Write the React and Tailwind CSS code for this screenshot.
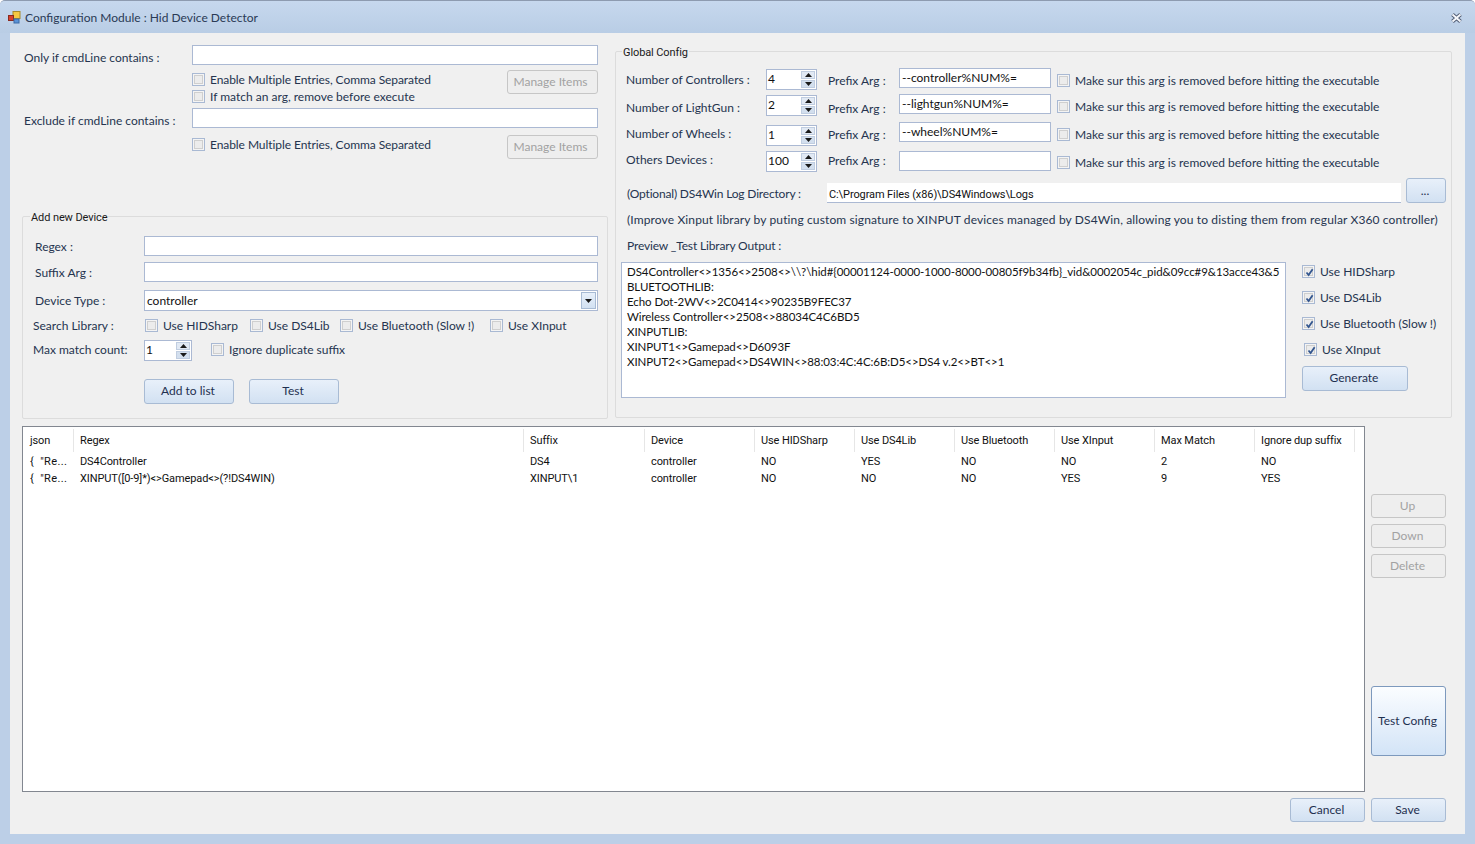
import React from "react";

const inputCls = "h-5 bg-white border border-[#abb9d3] px-[2px] text-[12px] leading-[17px] text-[#111]";
const narrowFont = "[font-family:Roboto,sans-serif] text-[11px] tracking-[-0.1px]";

const Check = ({ label, checked, className = "" }) => (
  <div className={`flex items-center h-[17px] ${className}`}>
    <div className="w-[13px] h-[13px] shrink-0 border border-[#a9b9d3] bg-[#f4f4f4] p-px">
      <div className="w-full h-full border border-[#cfcfcf] bg-[#ececec] relative">
        {checked && (
          <svg viewBox="0 0 9 9" className="absolute inset-0 w-[9px] h-[9px]">
            <path d="M1.5 4.5 L3.6 7 L7.6 1.2" fill="none" stroke="#33568f" strokeWidth="1.8" />
          </svg>
        )}
      </div>
    </div>
    {label && <span className="ml-[5px] whitespace-nowrap">{label}</span>}
  </div>
);

const Spin = ({ value, className = "" }) => (
  <div className={`flex h-[21px] bg-white border border-[#abb9d3] ${className}`}>
    <div className="flex-1 pl-px leading-[18px] text-[#111]">{value}</div>
    <div className="w-[16px] flex flex-col gap-px p-px">
      <div className="flex-1 flex items-center justify-center bg-[#e1e9f4] border border-[#c0cde0]">
        <svg viewBox="0 0 7 4" className="w-[7px] h-[4px]"><path d="M3.5 0 L7 4 H0 Z" fill="#1a1a1a" /></svg>
      </div>
      <div className="flex-1 flex items-center justify-center bg-[#d3dfee] border border-[#c0cde0]">
        <svg viewBox="0 0 7 4" className="w-[7px] h-[4px]"><path d="M0 0 H7 L3.5 4 Z" fill="#1a1a1a" /></svg>
      </div>
    </div>
  </div>
);

const Btn = ({ children, className = "" }) => (
  <button className={`shrink-0 flex items-center justify-center pr-[2px] rounded-[3px] border border-[#a8bbd4] bg-gradient-to-b from-[#e8f0fa] to-[#d2e1f2] text-[#1f3050] ${className}`}>
    {children}
  </button>
);

const DisabledBtn = ({ children, className = "" }) => (
  <button className={`shrink-0 flex items-center justify-center pr-[2px] rounded-[3px] border border-[#c6c6c6] bg-[#eeeeee] text-[#a2a2a2] ${className}`}>
    {children}
  </button>
);

const globalRows = [
  { label: "Number of Controllers :", value: "4", prefix: "--controller%NUM%=", h: "h-[26px]", lab: "mt-[2px]", spin: "mt-[1px]", inp: "", pre: "mt-[3px]" },
  { label: "Number of LightGun :", value: "2", prefix: "--lightgun%NUM%=", h: "h-[28px]", lab: "mt-[4px]", spin: "mt-[1px]", inp: "", pre: "mt-[5px]" },
  { label: "Number of Wheels :", value: "1", prefix: "--wheel%NUM%=", h: "h-[28px]", lab: "mt-[2px]", spin: "mt-[3px]", inp: "", pre: "mt-[3px]" },
  { label: "Others Devices :", value: "100", prefix: "", h: "h-[28px]", lab: "mt-0", spin: "mt-[1px]", inp: "mt-[1px]", pre: "mt-[1px]" },
];

const columns = ["json", "Regex", "Suffix", "Device", "Use HIDSharp", "Use DS4Lib", "Use Bluetooth", "Use XInput", "Max Match", "Ignore dup suffix"];
const tableRows = [
  ['{  "Re...', "DS4Controller", "DS4", "controller", "NO", "YES", "NO", "NO", "2", "NO"],
  ['{  "Re...', 'XINPUT([0-9]*)<>Gamepad<>(?!DS4WIN)', "XINPUT\\1", "controller", "NO", "NO", "NO", "YES", "9", "YES"],
];
const gridCols = "grid grid-cols-[50px_450px_121px_110px_100px_100px_100px_100px_100px_100px] ml-px";

const previewLines = [
  "DS4Controller<>1356<>2508<>\\\\?\\hid#{00001124-0000-1000-8000-00805f9b34fb}_vid&0002054c_pid&09cc#9&13acce43&5",
  "BLUETOOTHLIB:",
  "Echo Dot-2WV<>2C0414<>90235B9FEC37",
  "Wireless Controller<>2508<>88034C4C6BD5",
  "XINPUTLIB:",
  "XINPUT1<>Gamepad<>D6093F",
  "XINPUT2<>Gamepad<>DS4WIN<>88:03:4C:4C:6B:D5<>DS4 v.2<>BT<>1",
];

export default function App() {
  return (
    <div className="w-[1475px] h-[844px] overflow-hidden flex flex-col bg-[#bccfe7] border-t border-[#8d9bb0] rounded-t-[5px] [font-family:Lato,'Noto_Sans',sans-serif] text-[12px] text-[#25344f]">
      {/* title bar */}
      <div className="h-[32px] shrink-0 flex items-center pl-[8px] pr-[13px] pt-px bg-gradient-to-b from-[#c6d8ee] to-[#b9cde5]">
        <svg viewBox="0 0 13 13" className="w-[13px] h-[13px]">
          <rect x="5" y="0.5" width="7" height="7" fill="#f5c842" stroke="#a88a2a" />
          <rect x="0.5" y="4.5" width="5" height="5" fill="#d8402c" stroke="#8a2a20" />
          <rect x="6" y="8" width="5" height="4" fill="#5b93d8" stroke="#3c6aa5" />
        </svg>
        <span className="ml-[4px] text-[#2a3a55] text-[12px]">Configuration Module : Hid Device Detector</span>
        <svg viewBox="0 0 11 10" className="ml-auto w-[11px] h-[10px]">
          <path d="M1.5 1.5 L9.5 8.5 M9.5 1.5 L1.5 8.5" stroke="#4e5a72" strokeWidth="3.8" />
          <path d="M1.5 1.5 L9.5 8.5 M9.5 1.5 L1.5 8.5" stroke="#f4f6fa" strokeWidth="2" />
        </svg>
      </div>

      {/* client area */}
      <div className="w-[1455px] h-[801px] ml-[10px] bg-[#f0f0f0] flex flex-col">
        <div className="flex h-[385px] shrink-0">
          {/* left column */}
          <div className="w-[605px] shrink-0 pl-[12px] pt-[12px]">
            <div className="pl-[2px]">
              <div className="flex items-start h-5">
                <span className="w-[168px] mt-[4px]">Only if cmdLine contains :</span>
                <div className={`w-[406px] ${inputCls}`} />
              </div>
              <div className="flex mt-[5px] ml-[168px] h-[38px]">
                <div className="w-[315px] pt-px">
                  <Check label="Enable Multiple Entries, Comma Separated" className="tracking-[-0.07px]" />
                  <Check label="If match an arg, remove before execute" />
                </div>
                <DisabledBtn className="w-[91px] h-[24px] pr-[4px]">Manage Items</DisabledBtn>
              </div>
              <div className="flex items-start h-5">
                <span className="w-[168px] mt-[4px]">Exclude if cmdLine contains :</span>
                <div className={`w-[406px] ${inputCls}`} />
              </div>
              <div className="flex mt-[7px] ml-[168px]">
                <div className="w-[315px] pt-px">
                  <Check label="Enable Multiple Entries, Comma Separated" className="tracking-[-0.07px]" />
                </div>
                <DisabledBtn className="w-[91px] h-[24px] pr-[4px]">Manage Items</DisabledBtn>
              </div>
            </div>

            {/* add new device */}
            <div className="mt-[57px] w-[586px] h-[203px] border border-[#dcdcdc] rounded-[2px]">
              <div className={`-mt-[7px] ml-[7px] w-fit px-px bg-[#f0f0f0] text-[#1a1a1a] leading-[16px] ${narrowFont}`}>Add new Device</div>
              <div className="pl-[10px] mt-[10px]">
                <div className="flex items-start h-5">
                  <span className="w-[111px] pl-[2px] mt-[2px]">Regex :</span>
                  <div className={`w-[454px] ${inputCls}`} />
                </div>
                <div className="flex items-start h-5 mt-[6px]">
                  <span className="w-[111px] pl-[2px] mt-[2px]">Suffix Arg :</span>
                  <div className={`w-[454px] ${inputCls}`} />
                </div>
                <div className="flex items-center mt-[8px]">
                  <span className="w-[111px] pl-[2px]">Device Type :</span>
                  <div className="w-[454px] h-[21px] flex bg-white border border-[#abb9d3] text-[#111]">
                    <span className="flex-1 pl-[2px] leading-[19px]">controller</span>
                    <div className="w-[15px] m-px flex items-center justify-center bg-gradient-to-b from-[#e8f0fa] to-[#d2e1f2] border border-[#a8bbd4]">
                      <svg viewBox="0 0 7 4" className="w-[7px] h-[4px]"><path d="M0 0 H7 L3.5 4 Z" fill="#1a1a1a" /></svg>
                    </div>
                  </div>
                </div>
                <div className="flex items-center mt-[6px] h-[17px]">
                  <span className="w-[112px]">Search Library :</span>
                  <Check label="Use HIDSharp" className="w-[105px]" />
                  <Check label="Use DS4Lib" className="w-[90px]" />
                  <Check label="Use Bluetooth (Slow !)" className="w-[150px]" />
                  <Check label="Use XInput" />
                </div>
                <div className="flex items-center mt-[6px]">
                  <span className="w-[111px] pb-[2px]">Max match count:</span>
                  <Spin value="1" className="w-[48px]" />
                  <Check label="Ignore duplicate suffix" className="ml-[19px] mb-[2px]" />
                </div>
                <div className="flex mt-[18px] ml-[111px] gap-[15px]">
                  <Btn className="w-[90px] h-[25px] pb-[2px]">Add to list</Btn>
                  <Btn className="w-[90px] h-[25px] pb-[2px]">Test</Btn>
                </div>
              </div>
            </div>
          </div>

          {/* global config */}
          <div className="w-[837px] h-[367px] mt-[18px] border border-[#dcdcdc] rounded-[2px]">
            <div className={`-mt-[7px] ml-[6px] w-fit px-px bg-[#f0f0f0] text-[#1a1a1a] leading-[16px] ${narrowFont}`}>Global Config</div>
            <div className="pl-[10px] mt-[7px]">
              {globalRows.map((r) => (
                <div key={r.label} className={`flex items-start ${r.h}`}>
                  <span className={`w-[140px] h-5 leading-5 ${r.lab}`}>{r.label}</span>
                  <Spin value={r.value} className={`w-[51px] ${r.spin}`} />
                  <span className={`ml-[11px] w-[71px] h-5 leading-5 ${r.pre}`}>Prefix Arg :</span>
                  <div className={`w-[152px] text-[#111] ${inputCls} ${r.inp}`}>{r.prefix}</div>
                  <Check label="Make sur this arg is removed before hitting the executable" className="ml-[6px] mt-[4px]" />
                </div>
              ))}
              <div className="flex items-end h-[25px]">
                <span className="w-[201px] pl-px h-5 leading-5 -mb-px tracking-[-0.18px]">(Optional) DS4Win Log Directory :</span>
                <div className={`w-[574px] h-5 bg-white border-b border-[#abb9d3] pl-[2px] leading-[23px] text-[#111] ${narrowFont}`}>C:\Program Files (x86)\DS4Windows\Logs</div>
                <Btn className="ml-[5px] w-[40px] h-[25px]">...</Btn>
              </div>
              <div className="mt-[7px] pl-px h-5 leading-5 whitespace-nowrap tracking-[0.13px]">(Improve Xinput library by puting custom signature to XINPUT devices managed by DS4Win, allowing you to disting them from regular X360 controller)</div>
              <div className="mt-[6px] pl-px h-5 leading-5 tracking-[-0.15px]">Preview _Test Library Output :</div>
            </div>
            <div className="flex mt-[6px] ml-[5px]">
              <div className="w-[665px] h-[136px] bg-white border border-[#abb9d3] pt-px pl-[5px] leading-[15px] text-[#111] text-[11.5px] tracking-[-0.07px] whitespace-nowrap overflow-hidden">
                {previewLines.map((l) => (
                  <div key={l}>{l}</div>
                ))}
              </div>
              <div className="ml-[16px] flex flex-col pt-px">
                <Check checked label="Use HIDSharp" />
                <Check checked label="Use DS4Lib" className="mt-[9px]" />
                <Check checked label="Use Bluetooth (Slow !)" className="mt-[9px]" />
                <Check checked label="Use XInput" className="mt-[9px] ml-[2px]" />
                <Btn className="w-[106px] h-[25px] mt-[8px] pb-[2px]">Generate</Btn>
              </div>
            </div>
          </div>
        </div>

        {/* table + side buttons */}
        <div className="flex mt-[8px] ml-[12px]">
          <div className={`w-[1343px] h-[366px] bg-white border border-[#828790] text-[#111] ${narrowFont}`}>
            <div className={`${gridCols} h-[23px] mt-[2px]`}>
              {columns.map((c) => (
                <div key={c} className="pl-[6px] leading-[23px] border-r border-[#e6e6e6] whitespace-nowrap overflow-hidden">{c}</div>
              ))}
            </div>
            <div className="pt-px">
              {tableRows.map((row) => (
                <div key={row[1]} className={`${gridCols} h-[17px] leading-[17px]`}>
                  {row.map((cell, i) => (
                    <div key={i} className={i === 0 ? "pl-[6px] whitespace-pre overflow-hidden tracking-[0.35px]" : "pl-[6px] whitespace-nowrap overflow-hidden"}>{cell}</div>
                  ))}
                </div>
              ))}
            </div>
          </div>
          <div className="ml-[6px] w-[75px] flex flex-col text-[12px]">
            <DisabledBtn className="w-[75px] h-[24px] mt-[68px]">Up</DisabledBtn>
            <DisabledBtn className="w-[75px] h-[24px] mt-[6px]">Down</DisabledBtn>
            <DisabledBtn className="w-[75px] h-[24px] mt-[6px]">Delete</DisabledBtn>
            <button className="w-[75px] h-[70px] mt-[108px] pr-[2px] rounded-[3px] border border-[#7d99bd] bg-gradient-to-b from-[#fbfdff] to-[#d3e4f7] text-[#1f3050]">Test Config</button>
          </div>
        </div>

        {/* footer */}
        <div className="flex justify-end gap-[6px] mt-[6px] pr-[19px]">
          <Btn className="w-[75px] h-[24px]">Cancel</Btn>
          <Btn className="w-[75px] h-[24px]">Save</Btn>
        </div>
      </div>
    </div>
  );
}
